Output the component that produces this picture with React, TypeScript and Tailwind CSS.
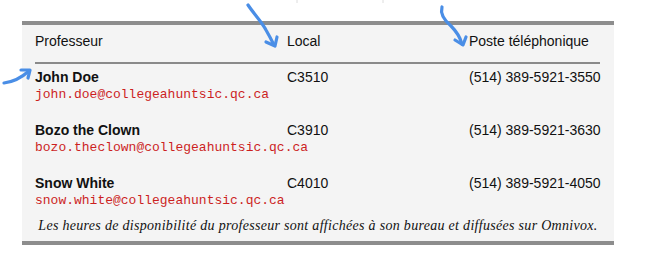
const rows = [
  { name: 'John Doe', email: 'john.doe@collegeahuntsic.qc.ca', local: 'C3510', phone: '(514) 389-5921-3550' },
  { name: 'Bozo the Clown', email: 'bozo.theclown@collegeahuntsic.qc.ca', local: 'C3910', phone: '(514) 389-5921-3630' },
  { name: 'Snow White', email: 'snow.white@collegeahuntsic.qc.ca', local: 'C4010', phone: '(514) 389-5921-4050' },
]

const sans = { fontFamily: '"Liberation Sans", Arial, sans-serif' }

function Arrows() {
  return (
    <svg className="absolute left-0 top-0 pointer-events-none" width={645} height={265} fill="none">
      <g stroke="#4a8ee6" strokeWidth={3.2} strokeLinecap="round" strokeLinejoin="round">
        {/* Local */}
        <path d="M248 5 C254 14 262 22 266 30 C270 37 272 41 274 45" />
        <path d="M266 42 L275 46 L277 37" />
        {/* Poste */}
        <path d="M442 7 C440 14 444 20 451 26 C457 32 460 37 462 44" />
        <path d="M455 40 L463 45 L466 37" />
        {/* John Doe */}
        <path d="M4 83 C12 82 20 79 29 71" />
        <path d="M21 70 L30 70 L28 78" />
      </g>
      <g stroke="#dcdcdc" strokeWidth={1}>
        <path d="M297 0 L297 3" />
        <path d="M383 0 L383 3" />
      </g>
    </svg>
  )
}

export default function App() {
  return (
    <div className="relative w-[645px] h-[265px] bg-white overflow-hidden">
      <div className="ml-[22px] mt-[21px] w-[592px] bg-[#f4f4f4] border-t-4 border-b-4 border-[#8d8d8d] px-[13px] text-[14px] text-[#111]" style={sans}>
        <div className="grid grid-cols-[252px_182px_1fr] leading-[18px] pt-[7px] pb-[12px]">
          <div>Professeur</div>
          <div>Local</div>
          <div>Poste téléphonique</div>
        </div>
        <div className="h-[1.5px] bg-[#8a8a8a] mr-[1px]" />
        <div className="flex flex-col gap-[17px] pt-[4px]">
          {rows.map((r) => (
            <div key={r.name} className="grid grid-cols-[252px_182px_1fr] leading-[18px]">
              <div>
                <div className="font-bold">{r.name}</div>
                <div className="text-[13px] text-[#cc1f1f] whitespace-nowrap" style={{ fontFamily: '"Liberation Mono", "Courier New", monospace' }}>
                  {r.email}
                </div>
              </div>
              <div>{r.local}</div>
              <div>{r.phone}</div>
            </div>
          ))}
        </div>
        <div
          className="italic text-[14px] tracking-[0.3px] leading-[16px] text-center whitespace-nowrap pt-[8px] pb-[7px] text-[#111]"
          style={{ fontFamily: '"Liberation Serif", "Times New Roman", serif' }}
        >
          Les heures de disponibilité du professeur sont affichées à son bureau et diffusées sur Omnivox.
        </div>
      </div>
      <Arrows />
    </div>
  )
}
